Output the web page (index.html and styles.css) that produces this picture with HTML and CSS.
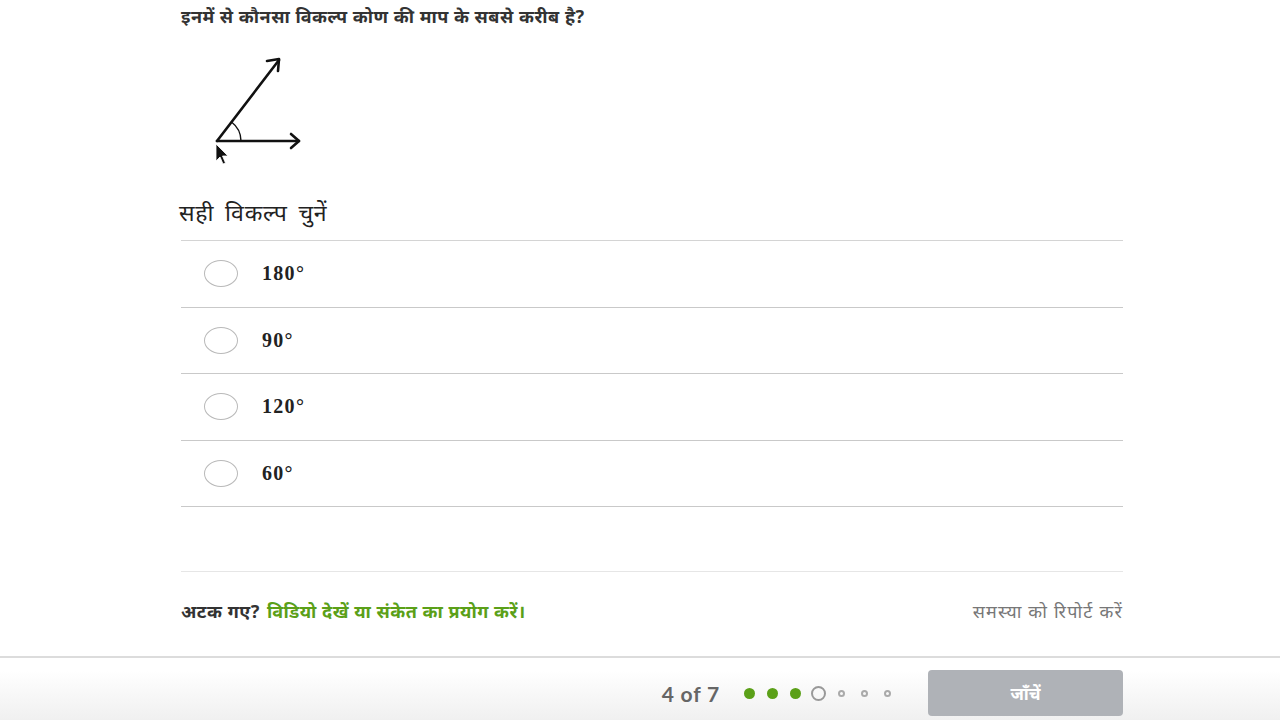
FILE: index.html
```html
<!DOCTYPE html>
<html lang="hi">
<head>
    <meta charset="UTF-8">
    <meta name="viewport" content="width=device-width, initial-scale=1.0">
    <title>अभ्यास - कोण</title>
    <link rel="stylesheet" href="styles.css">
</head>
<body>
    <div class="page">
        <!-- प्रश्न -->
        <div class="question">
            <p class="question-text">इनमें से कौनसा विकल्प कोण की माप के सबसे करीब है?</p>
            <svg class="figure" width="140" height="134" viewBox="0 0 140 134">
                <g fill="none" stroke="#111" stroke-width="2.6" stroke-linecap="round" stroke-linejoin="round">
                    <line x1="36" y1="101" x2="98" y2="20"/>
                    <polyline points="86,21 98,19 97,31"/>
                    <line x1="36" y1="101" x2="118" y2="101"/>
                    <polyline points="110,94 118,101 110,108"/>
                </g>
                <path d="M60 101 A24 24 0 0 0 50.5 82" fill="none" stroke="#111" stroke-width="1.4"/>
                <path d="M35 104 L35 121 L39 117 L42 124 L44.5 123 L41.5 116 L47 116 Z" fill="#111" stroke="#fff" stroke-width="0.8"/>
            </svg>
        </div>

        <h2 class="choose">सही विकल्प चुनें</h2>

        <ul class="options">
            <li class="option"><span class="radio"></span><span class="option-label">180°</span></li>
            <li class="option"><span class="radio"></span><span class="option-label">90°</span></li>
            <li class="option"><span class="radio"></span><span class="option-label">120°</span></li>
            <li class="option"><span class="radio"></span><span class="option-label">60°</span></li>
        </ul>

        <div class="help-row">
            <p class="stuck"><b>अटक गए?</b> <a href="#" class="hint-link">विडियो देखें या संकेत का प्रयोग करें।</a></p>
            <a href="#" class="report">समस्या को रिपोर्ट करें</a>
        </div>
    </div>

    <!-- नीचे की पट्टी -->
    <div class="footer">
        <div class="footer-inner">
            <span class="count">4 of 7</span>
            <div class="dots">
                <span class="dot done"></span>
                <span class="dot done"></span>
                <span class="dot done"></span>
                <span class="dot current"></span>
                <span class="dot"></span>
                <span class="dot"></span>
                <span class="dot"></span>
            </div>
            <button class="btn-check">जाँचें</button>
        </div>
    </div>
</body>
</html>
```

FILE: styles.css
```css
/* पेज */
body {
    margin: 0;
    padding: 0;
    font-family: "Noto Sans", "Lato", sans-serif;
    background-color: #fff;
    color: #333;
    height: 720px;
    overflow: hidden;
}

.page {
    width: 942px;
    margin-left: 181px;
}

/* प्रश्न */
.question-text {
    margin: 0;
    padding-top: 5px;
    font-size: 18px;
    font-weight: bold;
    letter-spacing: 0.5px;
    line-height: 22px;
    color: #333;
}

.figure {
    display: block;
    margin-top: 13px;
}

.choose {
    margin: 23px 0 0 -2px;
    font-size: 23px;
    font-weight: normal;
    word-spacing: 4px;
    letter-spacing: 0.8px;
    line-height: 30px;
    color: #222;
    height: 43px;
}

/* विकल्प */
.options {
    list-style: none;
    margin: 0;
    padding: 0;
    border-top: 1px solid #d4d4d4;
}

.option {
    display: flex;
    align-items: center;
    height: 65.5px;
    border-bottom: 1px solid #c9c9c9;
}

.radio {
    width: 32px;
    height: 25px;
    border: 1.5px solid #b9b9b9;
    border-radius: 50%;
    margin-left: 23px;
    margin-right: 24px;
    background-color: #fff;
}

.option-label {
    font-family: "Liberation Serif", serif;
    font-size: 20px;
    font-weight: bold;
    letter-spacing: 1.3px;
    color: #222;
}

/* मदद */
.help-row {
    margin-top: 64px;
    border-top: 1px solid #e6e6e6;
    display: flex;
    justify-content: space-between;
    align-items: center;
    height: 78px;
    padding-bottom: 6px;
}

.stuck {
    margin: 0;
    font-size: 18px;
    letter-spacing: 0.5px;
    color: #333;
}

.hint-link {
    color: #5ba018;
    font-weight: bold;
    text-decoration: none;
    margin-left: 2px;
}

.report {
    color: #777;
    font-size: 18px;
    letter-spacing: 1.2px;
    text-decoration: none;
}

/* नीचे की पट्टी */
.footer {
    border-top: 2px solid #dcdcdc;
    height: 62px;
    background: linear-gradient(#fff 20%, #f0f0f0);
}

.footer-inner {
    width: 942px;
    margin-left: 181px;
    display: flex;
    align-items: center;
    justify-content: flex-end;
    height: 58px;
    padding-top: 6px;
}

.count {
    font-family: "Lato", sans-serif;
    font-size: 21px;
    font-weight: bold;
    letter-spacing: 0.8px;
    color: #666;
    margin-right: 24px;
}

.dots {
    display: flex;
    align-items: center;
    gap: 12px;
    margin-right: 35px;
}

.dot {
    width: 7px;
    height: 7px;
    border: 2px solid #aaa;
    border-radius: 50%;
    box-sizing: border-box;
    margin: 0 2px;
}

.dot.done {
    width: 11px;
    height: 11px;
    margin: 0;
    border: none;
    background-color: #5ba018;
}

.dot.current {
    width: 15px;
    height: 15px;
    margin: 0 -2px;
    border-color: #999;
}

.btn-check {
    width: 195px;
    height: 46px;
    border: none;
    border-radius: 4px;
    background-color: #afb2b7;
    color: #fff;
    font-family: "Noto Sans", sans-serif;
    font-size: 17px;
    font-weight: bold;
}
```
